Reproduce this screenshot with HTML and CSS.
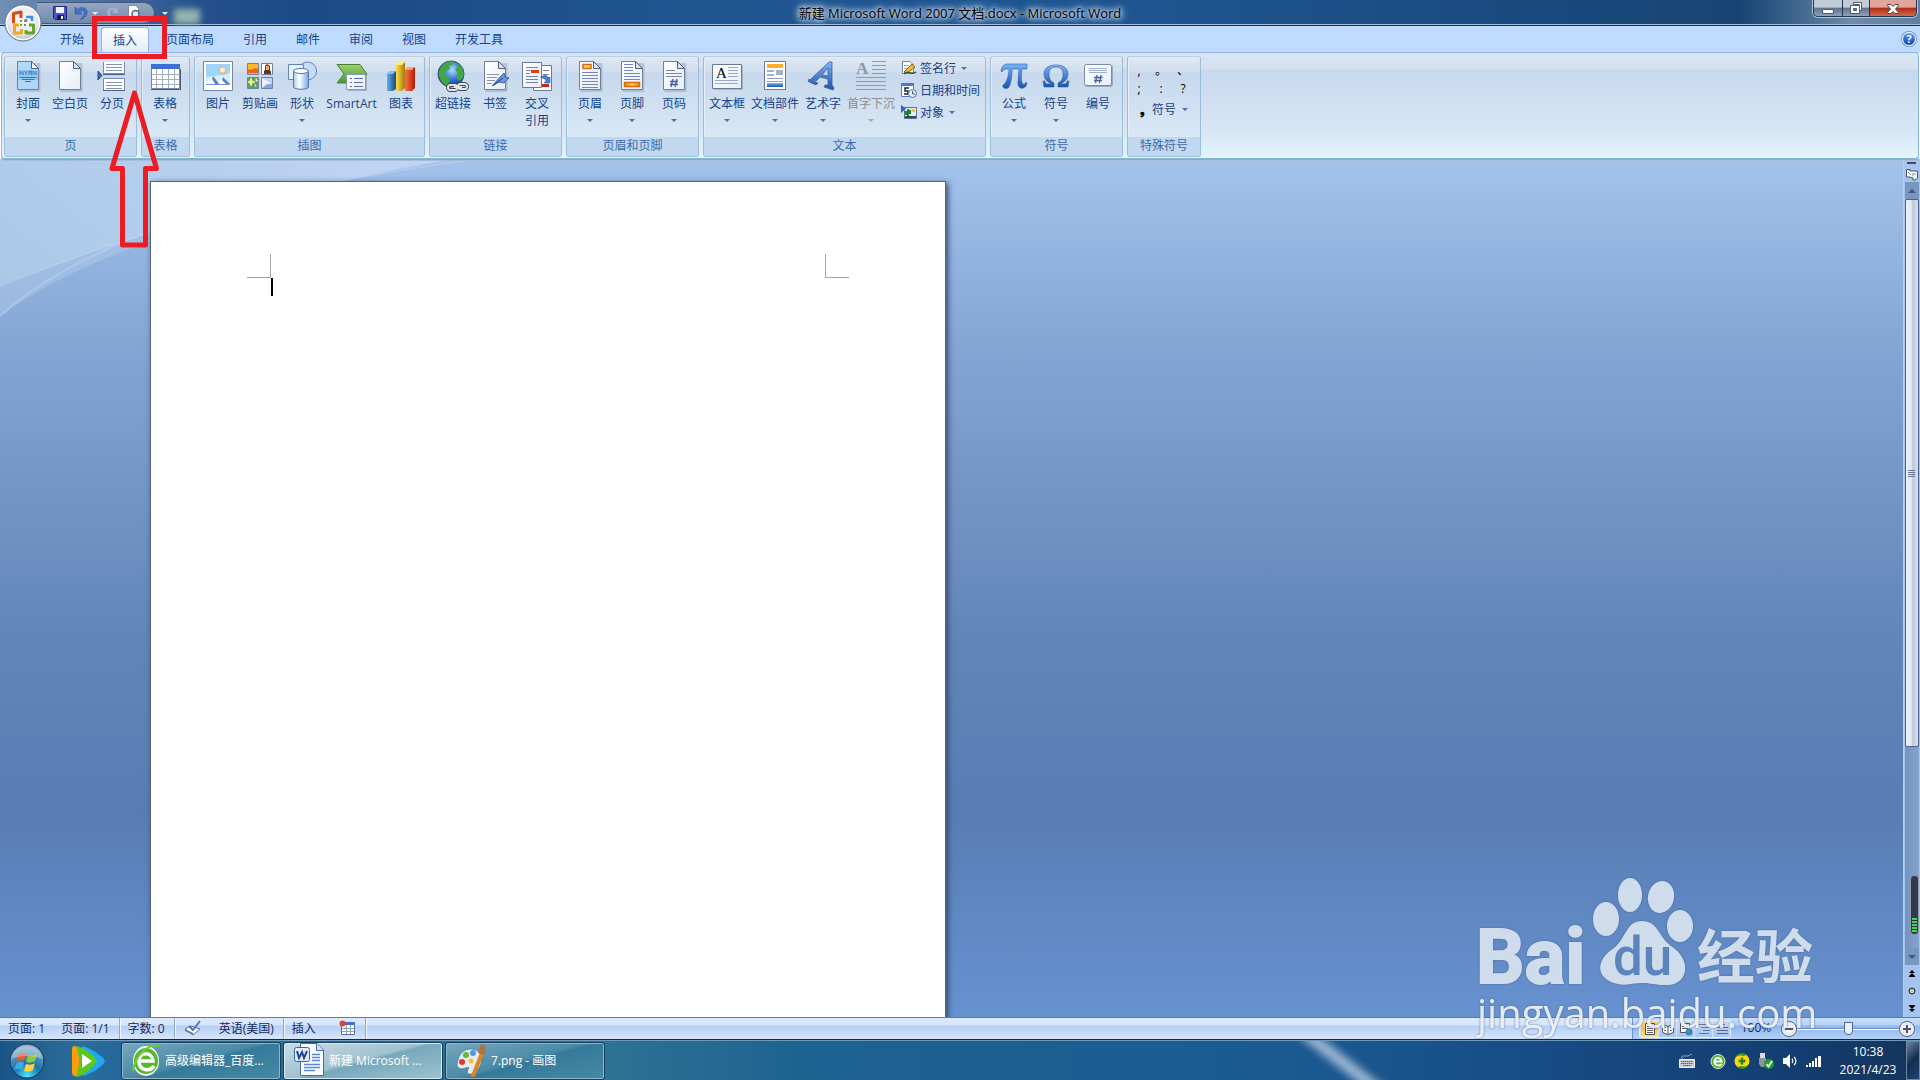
FILE: index.html
```html
<!DOCTYPE html>
<html lang="zh-CN">
<head>
    <meta charset="UTF-8">
    <meta name="viewport" content="width=device-width, initial-scale=1.0">
    <title>新建 Microsoft Word 2007 文档.docx - Microsoft Word</title>
    <link rel="stylesheet" href="styles.css">
</head>
<body>

    <!-- shared gradients and the blank sheet used by many icons -->
    <svg class="defs" width="0" height="0" aria-hidden="true">
        <defs>
            <linearGradient id="paper" x1="0" y1="0" x2="1" y2="1">
                <stop offset="0" stop-color="#ffffff"/><stop offset="1" stop-color="#e6edf8"/>
            </linearGradient>
            <linearGradient id="blue" x1="0" y1="0" x2="0" y2="1">
                <stop offset="0" stop-color="#78b4fb"/><stop offset="1" stop-color="#1c52ad"/>
            </linearGradient>
            <linearGradient id="glass" x1="0" y1="0" x2="1" y2="0">
                <stop offset="0" stop-color="#a9cdf5"/><stop offset=".4" stop-color="#fff"/><stop offset="1" stop-color="#76a7e6"/>
            </linearGradient>
            <linearGradient id="green" x1="0" y1="0" x2="0" y2="1">
                <stop offset="0" stop-color="#9cd06a"/><stop offset="1" stop-color="#4b9a35"/>
            </linearGradient>
            <linearGradient id="orange" x1="0" y1="0" x2="1" y2="0">
                <stop offset="0" stop-color="#f08a0a"/><stop offset=".5" stop-color="#ffc95c"/><stop offset="1" stop-color="#f08a0a"/>
            </linearGradient>
            <linearGradient id="barBlue"><stop offset="0" stop-color="#5eb0ee"/><stop offset="1" stop-color="#1d4880"/></linearGradient>
            <linearGradient id="barGold"><stop offset="0" stop-color="#ffe04a"/><stop offset="1" stop-color="#a17b05"/></linearGradient>
            <linearGradient id="barRed"><stop offset="0" stop-color="#ff7348"/><stop offset="1" stop-color="#b01c05"/></linearGradient>
            <radialGradient id="globe" cx=".55" cy=".35" r=".7">
                <stop offset="0" stop-color="#b4deff"/><stop offset=".5" stop-color="#2f78d8"/><stop offset="1" stop-color="#0c2f7d"/>
            </radialGradient>
            <radialGradient id="orb" cx=".5" cy=".95" r=".9">
                <stop offset="0" stop-color="#54e6ff"/><stop offset=".45" stop-color="#1673ad"/><stop offset="1" stop-color="#8fb0c8"/>
            </radialGradient>
            <radialGradient id="pearl" cx=".5" cy=".4" r=".6">
                <stop offset="0" stop-color="#ffffff"/><stop offset=".7" stop-color="#e3e6ec"/><stop offset="1" stop-color="#a9b1bf"/>
            </radialGradient>
            <g id="sheet">
                <path d="M6.500 3H28.500V32H6.500z" fill="#6b7f9c" opacity=".3"/>
                <path d="M5.500 1.500H19.500L26.500 8.500V29.500H5.500z" fill="url(#paper)" stroke="#6f7f9c"/>
                <path d="M19.500 1.500V8.500H26.500z" fill="#dbe5f4" stroke="#4e607f"/>
            </g>
        </defs>
    </svg>

    <div class="window">
        <header class="titlebar">
            <div class="quick-access">
                <button class="icon-btn" aria-label="保存">
                    <svg width="16" height="16" viewBox="0 0 16 16"><path d="M1.500 1.500H14.500V14.500H3L1.500 13z" fill="#4c55c4" stroke="#23277c"/><path d="M4 2H12V8H4z" fill="#eef2ff"/><path d="M5 10H12V15H5z" fill="#1b1e46"/><path d="M9 11H11V14H9z" fill="#fff"/></svg>
                </button>
                <button class="icon-btn" aria-label="撤销">
                    <svg width="16" height="16" viewBox="0 0 16 16"><path d="M2 2V9H9L6.500 6.600C9 4.500 11.500 5.500 11.300 8.200C11.200 10.500 9.500 12.500 7.500 14.500C12 13 14.500 10 14 6.500C13.400 2.500 8 1.200 4.500 4.500z" fill="#3f73cf" stroke="#2350a5" stroke-width=".6"/></svg>
                </button>
                <span class="arrow light"></span>
                <button class="icon-btn" aria-label="恢复" disabled>
                    <svg width="16" height="16" viewBox="0 0 16 16"><path d="M13 2V8H7L9.500 5.800C7 4.500 4.500 6 5 9C5.300 11 6.500 12.500 8 14C4 13 1.500 10 2 6.500C2.700 2.500 8 1.200 11 4z" fill="#a4b0c6"/></svg>
                </button>
                <button class="icon-btn" aria-label="打印预览">
                    <svg width="16" height="16" viewBox="0 0 16 16"><path d="M2.500.5H10L12.500 3.500V15.500H2.500z" fill="#fff" stroke="#7f8ba3"/><circle cx="9.500" cy="9" r="3.500" fill="#dceaf8" stroke="#58606e" stroke-width="1.500"/><path d="M12 11.500L15 15" stroke="#3b404a" stroke-width="2"/></svg>
                </button>
            </div>
            <span class="arrow light customise"></span>
            <span class="blob"></span>
            <h1 class="title">新建 Microsoft Word 2007 文档.docx - Microsoft Word</h1>
            <div class="caption-buttons">
                <button class="caption min" aria-label="最小化"><svg width="12" height="14" viewBox="0 0 12 14"><path d="M.5 8.500H11.500V12.500H.5z" fill="#fff" stroke="#525c70"/></svg></button>
                <button class="caption restore" aria-label="还原"><svg width="12" height="14" viewBox="0 0 12 14"><path d="M3.500 1.500H11.500V9.500H9.500V3.500H3.500z" fill="#fff" stroke="#525c70"/><path d="M.5 4.500H9.500V12.500H.5z" fill="#fff" stroke="#525c70"/><path d="M3.500 7.500H6.500V9.500H3.500z" fill="#6c7b94" stroke="#525c70"/></svg></button>
                <button class="caption close" aria-label="关闭"><svg width="12" height="14" viewBox="0 0 12 14"><path d="M.5 3.500H4L6 5.500L8 3.500H11.500V4.500L8.500 8L11.500 11.500V12.500H8L6 10.500L4 12.500H.5V11.500L3.500 8L.5 4.500z" fill="#fff" stroke="#59414c"/></svg></button>
            </div>
            <button class="office-button" aria-label="Office 按钮">
                <svg width="38" height="38" viewBox="0 0 38 38">
                    <circle cx="19" cy="19" r="18" fill="url(#pearl)" stroke="#65748f"/>
                    <circle cx="19" cy="19" r="16.500" fill="none" stroke="#fff" stroke-width="1.500"/>
                    <g fill="none" stroke-width="3" stroke-linejoin="round">
                        <path d="M11 18H9.500V9.500L17 8V14" stroke="#dc4a12"/>
                        <path d="M22 13H28V17M22 15V18" stroke="#3f8fdc" stroke-width="2.500"/>
                        <path d="M15 21H10.500V29H17.500V25" stroke="#f4a91c"/>
                        <path d="M25 21H29.500V29H22V26" stroke="#63a52f"/>
                    </g>
                    <path d="M16 16H18V18H16zM20 16H22V18H20z" fill="#e4601f"/><path d="M16 20H18V22H16zM20 20H22V22H20z" fill="#5ea33a"/>
                </svg>
            </button>
        </header>

        <nav class="tabs">
            <button class="tab">开始</button>
            <button class="tab selected">插入</button>
            <button class="tab">页面布局</button>
            <button class="tab">引用</button>
            <button class="tab">邮件</button>
            <button class="tab">审阅</button>
            <button class="tab">视图</button>
            <button class="tab">开发工具</button>
            <button class="help" aria-label="帮助">?</button>
        </nav>

        <div class="ribbon">
            <section class="group g-page">
                <div class="group-body">
                    <button class="cmd"><svg width="32" height="32" viewBox="0 0 32 32"><use href="#sheet"/><path d="M6 2H19V9H26V29H6z" fill="#a3d3f8" opacity=".85"/><path d="M6 10H26V20H6z" fill="#78bcf0" opacity=".6"/><path d="M19.500 1.500V8.500H26.500z" fill="#eef5fd" stroke="#4e607f"/><path d="M8 15V11L11 15V11M12.500 11L14 13L15.500 11M14 13V15M17 15V11H19.500V15M17 13H19.500M21 15V11L24 15V11" fill="none" stroke="#4a82bb"/><path d="M8 17.500H24M10 19.500H22M13 21.500H19" stroke="#3974b0"/></svg><span>封面</span><i class="arrow"></i></button>
                    <button class="cmd"><svg width="32" height="32" viewBox="0 0 32 32"><use href="#sheet"/></svg><span>空白页</span></button>
                    <button class="cmd"><svg width="32" height="32" viewBox="0 0 32 32"><path d="M7.500 2V13.500H28.500V2M7.500 30V18.500H28.500V30" fill="#fff" stroke="#7a89a6"/><path d="M10 4.500H26M10 7.500H26M10 10.500H26M10 22.500H26M10 25.500H26M10 28.500H26" stroke="#8491c4"/><path d="M7 14.500H29M7 30.500H29" stroke="#4f5f80"/><path d="M2 11L6 15.500L2 20z" fill="#4169c0" stroke="#2f4d99"/></svg><span>分页</span></button>
                </div>
                <h2 class="group-label">页</h2>
            </section>
            <section class="group g-table">
                <div class="group-body">
                    <button class="cmd"><svg width="32" height="32" viewBox="0 0 32 32"><path d="M2.500 4.500H30.500V28.500H2.500z" fill="#fff" stroke="#7787a5"/><path d="M2 4H31V9H2z" fill="#3f6fd3"/><path d="M3 14.500H30M3 19.500H30M3 24.500H30M7.500 9V28M13.500 9V28M19.500 9V28M25.500 9V28" stroke="#a3aec4"/><path d="M2 29.500H31M31.500 9V30" stroke="#4a5a78"/></svg><span>表格</span><i class="arrow"></i></button>
                </div>
                <h2 class="group-label">表格</h2>
            </section>
            <section class="group g-illustration">
                <div class="group-body">
                    <button class="cmd"><svg width="32" height="32" viewBox="0 0 32 32"><path d="M1.500 1.500H30.500V30.500H1.500z" fill="#fff" stroke="#76869f"/><path d="M4 4H28V25H4z" fill="#9fd5fa"/><path d="M4 18C12 14 20 17 28 13V25H4z" fill="#d5efff"/><circle cx="20.500" cy="10" r="3.200" fill="#fff1d5" stroke="#f8a05e"/><path d="M4 24L11 16L16 22L21 17L28 24V25H4z" fill="#f5f8ff"/><path d="M11 16L18 25H14L10 19zM21 17L28 24H24L20 20z" fill="#5c80c8"/><path d="M4 24H28V25H4z" fill="#6f92d0"/></svg><span>图片</span></button>
                    <button class="cmd"><svg width="32" height="32" viewBox="0 0 32 32"><path d="M3.500 3.500H14.500V14.500H3.500z" fill="#ffb728" stroke="#718198"/><path d="M4 9C7 12 11 6 14 9V13H4z" fill="#f06418"/><path d="M17.500 3.500H28.500V14.500H17.500z" fill="#fff" stroke="#718198"/><path d="M20 14V11L21 10V6L23 4L26 6V10L27 12V14z" fill="#633222"/><path d="M22 6H25V10H22z" fill="#ecae72"/><path d="M3.500 17.500H14.500V28.500H3.500z" fill="#4da567" stroke="#718198"/><path d="M7 18L8 21L11 22L8 23L7 26L6 23L4 22L6 21zM12 18V21H14M11 24L12 27" fill="#ffe58a" stroke="#ffe58a"/><path d="M17.500 17.500H28.500V28.500H17.500z" fill="#bdd0fc" stroke="#718198"/><path d="M18 18L27 23L18 28z" fill="#eaf2ff"/><path d="M18 28L23 24H28V28z" fill="#84a4eb"/></svg><span>剪贴画</span></button>
                    <button class="cmd"><svg width="32" height="32" viewBox="0 0 32 32"><circle cx="21.500" cy="11" r="9" fill="#c7defa" stroke="#6482b3"/><path d="M2.500 4.500H17.500V19.500H2.500z" fill="#e8f2fd" stroke="#6482b3"/><path d="M7.500 11V27C8 30 22.500 30 22.500 27V11z" fill="url(#glass)" stroke="#5274ad"/><ellipse cx="15" cy="11" rx="7.500" ry="2.500" fill="#fff" stroke="#5274ad"/></svg><span>形状</span><i class="arrow"></i></button>
                    <button class="cmd wide"><svg width="32" height="32" viewBox="0 0 32 32"><path d="M1 4.500H24L31 14L24 23H1L8 14z" fill="url(#green)" stroke="#488039"/><path d="M12 16H31V31H12z" fill="#5b708e" opacity=".4"/><path d="M10.500 14.500H29.500V29.500H10.500z" fill="url(#paper)" stroke="#8b9ab2"/><path d="M14 18.500H16M18 18.500H27M14 22.500H16M18 22.500H27M14 26.500H16M18 26.500H27" stroke="#5970a6"/></svg><span>SmartArt</span></button>
                    <button class="cmd"><svg width="32" height="32" viewBox="0 0 32 32"><path d="M2 14L5 11H11V29L8 31H2z" fill="url(#barBlue)"/><path d="M2 14L5 11H11L8 14z" fill="#7fc0f5"/><path d="M11 5L14 2H20V28L17 31H11z" fill="url(#barGold)"/><path d="M11 5L14 2H20L17 5z" fill="#ffe978"/><path d="M20 10L23 7H30V28L27 31H20z" fill="url(#barRed)"/><path d="M20 10L23 7H30L27 10z" fill="#ff9873"/></svg><span>图表</span></button>
                </div>
                <h2 class="group-label">插图</h2>
            </section>
            <section class="group g-page">
                <div class="group-body">
                    <button class="cmd"><svg width="32" height="32" viewBox="0 0 32 32"><circle cx="14" cy="14" r="13" fill="url(#globe)" stroke="#28527f"/><path d="M4 7C7 2 13 0 17 2L15 5L12 6L13 9L9 11L8 15L12 17L13 21L10 26C4 23 1 17 2 11zM20 3C25 6 28 11 26 18L22 21L19 17L21 14L18 9L21 7z" fill="#45a544"/><g fill="none" stroke="#40464f" stroke-width="4"><rect x="11" y="25" width="9" height="5" rx="2.500"/><rect x="21" y="24" width="9" height="5" rx="2.500"/></g><g fill="none" stroke="#e3e7ec" stroke-width="2"><rect x="11" y="25" width="9" height="5" rx="2.500"/><rect x="21" y="24" width="9" height="5" rx="2.500"/><path d="M17 27H25"/></g></svg><span>超链接</span></button>
                    <button class="cmd"><svg width="32" height="32" viewBox="0 0 32 32"><use href="#sheet"/><path d="M8 14.500H20M8 17.500H18M8 20.500H16M8 23.500H13" stroke="#8792b4"/><path d="M14 25L21 17L25 13L26 17L30 18L25 23L20 22L15 25z" fill="#6f96dd" stroke="#3d62ad"/><path d="M13 26L24 18" stroke="#223f80"/></svg><span>书签</span></button>
                    <button class="cmd"><svg width="32" height="32" viewBox="0 0 32 32"><path d="M12.500 5.500H30.500V30.500H12.500z" fill="#fff" stroke="#697a98"/><path d="M22 10.500H28M22 14.500H28M22 17.500H28" stroke="#7382a8"/><path d="M21 24H28V27H21z" fill="#c22b10"/><path d="M1.500 2.500H20.500V27.500H1.500z" fill="url(#paper)" stroke="#697a98"/><path d="M5 7.500H17M5 10.500H9M5 13.500H9M5 16.500H17M5 19.500H17M5 22.500H17" stroke="#7481b5"/><path d="M10 10H18V13H10z" fill="#e33d14"/><path d="M20 17C24 14 27 16 27 18L29 17V23H23L25 21C24 18 22 18 20 18z" fill="#4a7ddc" stroke="#2b56ab" stroke-width=".6"/></svg><span>交叉<br>引用</span></button>
                </div>
                <h2 class="group-label">链接</h2>
            </section>
            <section class="group g-page">
                <div class="group-body">
                    <button class="cmd"><svg width="32" height="32" viewBox="0 0 32 32"><use href="#sheet"/><path d="M9 4.500H17V8.500H9z" fill="#ffd078" stroke="#d36c0b" stroke-width="1.500"/><path d="M8 12.500H24M8 15.500H24M8 18.500H24M8 21.500H24M8 24.500H24M8 27.500H24" stroke="#7886c0"/></svg><span>页眉</span><i class="arrow"></i></button>
                    <button class="cmd"><svg width="32" height="32" viewBox="0 0 32 32"><use href="#sheet"/><path d="M8 4.500H17M8 7.500H17M8 10.500H17M8 13.500H24M8 16.500H24M8 19.500H24" stroke="#7886c0"/><path d="M8.500 22.500H23.500V26.500H8.500z" fill="url(#orange)" stroke="#d36c0b" stroke-width="1.500"/></svg><span>页脚</span><i class="arrow"></i></button>
                    <button class="cmd"><svg width="32" height="32" viewBox="0 0 32 32"><use href="#sheet"/><path d="M8 10.500H17M8 13.500H24M8 16.500H24" stroke="#7886c0"/><path d="M15 19L13 27M19 19L17 27M12 21.500H20M12 24.500H20" stroke="#465f9c" stroke-width="1.300"/></svg><span>页码</span><i class="arrow"></i></button>
                </div>
                <h2 class="group-label">页眉和页脚</h2>
            </section>
            <section class="group g-text">
                <div class="group-body">
                    <button class="cmd"><svg width="32" height="32" viewBox="0 0 32 32"><path d="M3 6H32V30H3z" fill="#6b7f9c" opacity=".4"/><path d="M1.500 4.500H30.500V28.500H1.500z" fill="url(#paper)" stroke="#687997"/><text class="serif" x="5" y="18" font-size="15">A</text><path d="M17 7.500H27M17 10.500H27M17 13.500H27M17 16.500H27M4 20.500H27M4 23.500H27" stroke="#98a8cc"/></svg><span>文本框</span><i class="arrow"></i></button>
                    <button class="cmd part"><svg width="32" height="32" viewBox="0 0 32 32"><path d="M5.500 1.500H26.500V29.500H5.500z" fill="#fff" stroke="#697a98"/><path d="M8 4H24V8H8z" fill="#ffac2b"/><path d="M8 10H15V12H8zM17 10H24V15H17zM8 14H15V16H8z" fill="#a5b0c9"/><path d="M8 18.500H24M8 21.500H24" stroke="#929fc0"/><path d="M8 23H24V27H8z" fill="url(#blue)"/></svg><span>文档部件</span><i class="arrow"></i></button>
                    <button class="cmd"><svg width="32" height="32" viewBox="0 0 32 32"><path d="M2 19L11 23L9 25L2 22L1 21zM4 19L22 2H25V25L27 28L26 30L17 27L18 25L21 25V19L13 17L9 21zM15 15L21 16V8z" fill="url(#blue)" stroke="#3e557d" stroke-width=".7"/></svg><span>艺术字</span><i class="arrow"></i></button>
                    <button class="cmd part" disabled><svg width="32" height="32" viewBox="0 0 32 32"><text class="serif" x="1" y="14" font-size="17" font-weight="bold" fill="#8997b0">A</text><path d="M17 1.500H31M17 5.500H31M17 9.500H31M17 13.500H31M1 17.500H31M1 21.500H31M1 25.500H31M1 29.500H31" stroke="#8b9bb8"/></svg><span>首字下沉</span><i class="arrow"></i></button>
                    <div class="small-list">
                        <button class="small"><svg width="16" height="16" viewBox="0 0 16 16"><path d="M1.500 1.500H9L12.500 5V13.500H1.500z" fill="#fff" stroke="#7585a0"/><path d="M3 5.500H8M3 8.500H8" stroke="#9ba7c4"/><path d="M3 12L11 4L14 7L6 13z" fill="#f4be32" stroke="#8c5a17"/><path d="M3 14C7 9 10 16 15 12" fill="none" stroke="#3e582c" stroke-width="1.600"/></svg>签名行<i class="arrow"></i></button>
                        <button class="small"><svg width="16" height="16" viewBox="0 0 16 16"><path d="M.5 1.500H12.500V14.500H.5z" fill="#fff" stroke="#5d77b1"/><path d="M0 1H13V4H0z" fill="#4a79d5"/><path d="M8 6H4V9H7V12H3" fill="none" stroke="#1b2542" stroke-width="1.500"/><circle cx="11.500" cy="11.500" r="4" fill="#e5effc" stroke="#5b769f"/><path d="M11.500 9V12H14" fill="none" stroke="#425781"/></svg>日期和时间</button>
                        <button class="small"><svg width="16" height="16" viewBox="0 0 16 16"><path d="M3.500 3.500H15.500V14.500H3.500z" fill="#e1f0fa" stroke="#5d708d"/><path d="M0 1L5 4.500L0 9z" fill="#3264c4"/><path d="M7 14V5M5 7V10H7M9 6V9H7" fill="none" stroke="#218226" stroke-width="2"/><circle cx="12.500" cy="6.500" r="1.500" fill="#f4b12a"/><path d="M4 12H15V14H4z" fill="#2e4c5c"/></svg>对象<i class="arrow"></i></button>
                    </div>
                </div>
                <h2 class="group-label">文本</h2>
            </section>
            <section class="group g-page">
                <div class="group-body">
                    <button class="cmd"><svg width="32" height="32" viewBox="0 0 32 32"><path d="M3 11C4 6 6 4 10 4H29V9H24C23 17 23 22 25 24C26 25 27 24 28 22L29 24C27 30 19 30 20 22L21 9H14C14 17 13 23 11 27C8 30 4 28 5 25C8 24 11 16 11 9C7 9 6 9 4 12z" fill="url(#blue)" stroke="#2f5da8" stroke-width=".6"/></svg><span>公式</span><i class="arrow"></i></button>
                    <button class="cmd"><svg width="32" height="32" viewBox="0 0 32 32"><path d="M3 21H5C5 23 6 24 8 24H11C6 21 4 18 4 14C4 8 9 5 16 5S28 8 28 14C28 18 26 21 21 24H24C26 24 27 23 27 21H29L28 27H18V23C22 21 23 18 23 14C23 10 21 7 16 7S9 10 9 14C9 18 10 21 14 23V27H4z" fill="url(#blue)" stroke="#2f5da8" stroke-width=".6"/></svg><span>符号</span><i class="arrow"></i></button>
                    <button class="cmd"><svg width="32" height="32" viewBox="0 0 32 32"><rect x="3" y="5" width="28" height="22" rx="2" fill="#64779a" opacity=".5"/><rect x="2.500" y="4.500" width="27" height="21" rx="2" fill="url(#paper)" stroke="#7c8aa5"/><path d="M7 8.500H25M7 10.500H25M7 12.500H25" stroke="#9faed0"/><path d="M15 15L13.500 23M19 15L17.500 23M12 17.500H20.500M12 20.500H20" stroke="#465f9c" stroke-width="1.300"/></svg><span>编号</span></button>
                </div>
                <h2 class="group-label">符号</h2>
            </section>
            <section class="group g-special">
                <div class="group-body marks">
                    <button>,</button><button>。</button><button>、</button>
                    <button>;</button><button>:</button><button>?</button>
                    <button class="more"><b>❟</b>符号<i class="arrow"></i></button>
                </div>
                <h2 class="group-label">特殊符号</h2>
            </section>
        </div>

        <main class="workspace">
            <svg class="swoosh" width="600" height="260" viewBox="0 0 600 260">
                <defs><linearGradient id="sw"><stop offset="0" stop-color="#b2ceea" stop-opacity=".8"/><stop offset="1" stop-color="#c3d7f4" stop-opacity=".95"/></linearGradient></defs>
                <path d="M0 0H455C330 20 140 70 0 128z" fill="url(#sw)"/>
                <path d="M0 128C45 108 90 90 150 73V83C90 103 40 128 0 157z" fill="#c3d8ef" opacity=".3"/>
                <path d="M475 0C300 25 110 60 0 157" fill="none" stroke="#c6daf3" stroke-opacity=".4" stroke-width="2"/>
            </svg>
            <div class="canvas">
                <article class="sheet">
                    <div class="margins">
                        <span class="crop left"></span>
                        <span class="crop right"></span>
                    </div>
                    <div class="text-area"><span class="caret"></span></div>
                </article>
            </div>
            <div class="scrollbar">
                <span class="splitter"></span>
                <button class="ruler" aria-label="标尺"><svg width="14" height="13" viewBox="0 0 14 13"><path d="M1.500 1.500H5V3H12.500V10L10 12H8V10L5 9H1.500z" fill="#fff" stroke="#46526b"/><path d="M3 4L6 7M8 5V8M10 5V7" stroke="#7a869c"/></svg></button>
                <div class="track">
                    <button class="step up" aria-label="向上滚动"></button>
                    <div class="thumb"><i></i></div>
                    <span class="meter"></span>
                    <button class="step down" aria-label="向下滚动"></button>
                </div>
                <div class="browse">
                    <button aria-label="前一页"><svg width="8" height="8" viewBox="0 0 8 8"><path d="M4 0L7 3H1zM4 3L7 6H1zM1 6H7V7H1z"/></svg></button>
                    <button aria-label="选择浏览对象"><svg width="8" height="8" viewBox="0 0 8 8"><circle cx="4" cy="4" r="3" fill="#c3c3c3" stroke="#222"/></svg></button>
                    <button aria-label="下一页"><svg width="8" height="8" viewBox="0 0 8 8"><path d="M4 8L7 5H1zM4 5L7 2H1zM1 1H7V2H1z"/></svg></button>
                </div>
            </div>
        </main>

        <footer class="statusbar">
            <button class="stat">页面: 1</button>
            <button class="stat sep">页面: 1/1</button>
            <button class="stat sep">字数: 0</button>
            <button class="stat" aria-label="校对"><svg width="18" height="16" viewBox="0 0 18 16"><path d="M1 9L7 6L16 9L9 15z" fill="#fff" stroke="#637290"/><path d="M1 9L9 13V15L1 11z" fill="#6b7b98"/><path d="M5 6L9 10L16 1" fill="none" stroke="#4a73c9" stroke-width="2"/></svg></button>
            <button class="stat sep">英语(美国)</button>
            <button class="stat">插入</button>
            <button class="stat sep" aria-label="宏录制"><svg width="16" height="16" viewBox="0 0 16 16"><path d="M2.500 2.500H15.500V14.500H2.500z" fill="#fff" stroke="#566c9c"/><path d="M2 2H16V5H2z" fill="#3f6fd3"/><path d="M3 8.500H15M3 11.500H15M7.500 5V14M11.500 5V14" stroke="#93a1bd"/><circle cx="3.500" cy="3.500" r="3" fill="#e0452a"/></svg></button>
            <div class="status-right">
                <div class="views">
                    <button class="view on" aria-label="页面视图"><svg width="14" height="14" viewBox="0 0 14 14"><path d="M2.500 1.500H11.500V12.500H2.500z" fill="#fff" stroke="#4a4e57"/><path d="M4 4.500H10M4 6.500H10M4 8.500H10M4 10.500H10" stroke="#5d6068"/></svg></button>
                    <button class="view" aria-label="阅读版式"><svg width="14" height="14" viewBox="0 0 14 14"><path d="M1.500 2.500L7 4.500L12.500 2.500V10.500L7 12.500L1.500 10.500zM7 4V12" fill="#fff" stroke="#4a4e57"/><path d="M3 5.500H5M3 8.500H5M9 5.500H11M9 8.500H11" stroke="#5d6068"/></svg></button>
                    <button class="view" aria-label="Web 版式"><svg width="14" height="14" viewBox="0 0 14 14"><path d="M1.500 1.500H10.500V10.500H1.500z" fill="#fff" stroke="#4a4e57"/><path d="M3 4.500H9M3 6.500H9" stroke="#5d6068"/><circle cx="10" cy="10" r="3.500" fill="#3b82cf"/><path d="M8 9L11 7L10 11z" fill="#4ba33e"/></svg></button>
                    <button class="view" aria-label="大纲视图"><svg width="14" height="14" viewBox="0 0 14 14"><path d="M1 2.500H9M4 5.500H13M6 8.500H13M2 11.500H12" stroke="#6a7690"/></svg></button>
                    <button class="view" aria-label="普通视图"><svg width="14" height="14" viewBox="0 0 14 14"><path d="M2 2.500H10M2 5.500H13M2 8.500H13M2 11.500H13" stroke="#5b6780"/></svg></button>
                </div>
                <button class="stat percent">100%</button>
                <button class="round" aria-label="缩小"><svg width="8" height="8" viewBox="0 0 8 8"><path d="M0 4H8" stroke="#4b566e" stroke-width="2"/></svg></button>
                <input class="zoom" type="range" min="10" max="190" value="100" aria-label="显示比例">
                <button class="round" aria-label="放大"><svg width="8" height="8" viewBox="0 0 8 8"><path d="M0 4H8M4 0V8" stroke="#4b566e" stroke-width="2"/></svg></button>
            </div>
        </footer>

        <div class="taskbar">
            <span class="streak"></span>
            <button class="start" aria-label="开始">
                <svg width="36" height="38" viewBox="0 0 36 38"><circle cx="18" cy="19" r="17" fill="url(#orb)" stroke="#0f3558"/><path d="M9 13C12 10 15 11 17 12L15 19C12 17 10 18 7 20z" fill="#ef5a28"/><path d="M19 13C22 14 25 14 28 12L26 19C23 21 20 21 17 20z" fill="#8fc93e"/><path d="M7 22C10 19 12 19 15 21L13 28C10 26 8 27 5 28z" fill="#3fa9e8"/><path d="M17 22C20 23 23 23 26 21L24 28C21 30 18 30 15 29z" fill="#ffd23a"/><path d="M2 17C5 0 31 0 34 17C24 13 12 13 2 17z" fill="#fff" opacity=".3"/></svg>
            </button>
            <button class="pinned" aria-label="播放器">
                <svg width="34" height="34" viewBox="0 0 34 34"><path d="M11 2C20 4 28 10 33 15C34 17 34 18 33 19C27 26 19 30 12 32z" fill="#22a7f4"/><path d="M1 5C1 2 3 1 6 3L11 27L6 32C3 33 1 31 1 28z" fill="#ff9c0a"/><path d="M5 2C13 3 21 10 25 15C26 17 26 18 25 19C19 26 12 32 5 33C9 22 9 12 5 2z" fill="#5cc81c"/><path d="M11 10L21 17L11 24z" fill="#fff"/></svg>
            </button>
            <button class="task">
                <svg width="28" height="34" viewBox="0 0 28 34"><ellipse cx="14" cy="18" rx="13" ry="15" fill="#fff"/><ellipse cx="14" cy="18" rx="12" ry="13" fill="#55b92b"/><path d="M22 23C18 29 7 28 7 18C7 9 20 8 21 18H9" fill="none" stroke="#fff" stroke-width="3.500"/><path d="M1 28C3 13 16 0 27 3" fill="none" stroke="#6dcf2f" stroke-width="2"/></svg>
                <span>高级编辑器_百度...</span>
            </button>
            <button class="task active">
                <svg width="30" height="34" viewBox="0 0 30 34"><path d="M6.500.5H23L29.500 7V32.500H6.500z" fill="#f6fafe" stroke="#4a69a5"/><path d="M22.500.5V7.500H29" fill="#d5e2f5" stroke="#4a69a5"/><path d="M10 21.500H26M10 24.500H26M10 27.500H21M18 11.500H26M18 14.500H26M18 17.500H26" stroke="#5f88ce" stroke-width="1.500"/><rect x=".5" y="4.500" width="15" height="14" rx="2" fill="#e2ecfa" stroke="#3963ae"/><path d="M3 8L5 15L8 9L10 15L13 8" fill="none" stroke="#1f4798" stroke-width="2"/></svg>
                <span>新建 Microsoft ...</span>
            </button>
            <button class="task">
                <svg width="30" height="34" viewBox="0 0 30 34"><path d="M2 17C4 6 16 3 23 9C29 15 24 29 15 31C10 32 11 27 13 25C10 23 7 28 3 25C0 23 1 20 2 17z" fill="#e5edf3" stroke="#5389a6"/><circle cx="6" cy="19" r="3" fill="#df3b2c"/><circle cx="10" cy="12" r="3" fill="#6eb536"/><circle cx="17" cy="10" r="3" fill="#4c9be0"/><circle cx="15" cy="18" r="2.500" fill="#f5c22d"/><path d="M26 10L17 33" stroke="#dd8423" stroke-width="4" stroke-linecap="round"/><path d="M22 10C23 6 23 4 26 1C31 2 31 6 28 12z" fill="#a97546"/></svg>
                <span>7.png - 画图</span>
            </button>
            <div class="tray">
                <button class="tray-icon keyboard" aria-label="输入法"><svg width="16" height="16" viewBox="0 0 16 16"><path d="M.5 6.500H15.500V14.500H.5z" fill="#c9ccd2" stroke="#eceef1"/><path d="M2 8.500H14M2 10.500H14M4 12.500H12" stroke="#5b6370" stroke-dasharray="1.500 .5"/><path d="M3 6V3H9L13 1" fill="none" stroke="#9aa0a8"/></svg></button>
                <button class="tray-icon" aria-label="浏览器"><svg width="16" height="16" viewBox="0 0 16 16"><circle cx="8" cy="8.500" r="7" fill="#4fb52c" stroke="#d9f3cb"/><path d="M12 11C9 14 4 12 4.500 8C5 4 11 4 11.500 8.500H5" fill="none" stroke="#fff" stroke-width="2"/></svg></button>
                <button class="tray-icon" aria-label="安全卫士"><svg width="16" height="16" viewBox="0 0 16 16"><circle cx="8" cy="8" r="7.500" fill="#ffd60a"/><path d="M1 5C3 0 9-1 13 2L9 3C5 2 3 3 1 5M15 11C13 16 7 17 3 14L7 13C11 14 13 13 15 11" fill="#2e9b22"/><path d="M8 4.500V11.500M4.500 8H11.500" stroke="#23881c" stroke-width="2.500"/></svg></button>
                <button class="tray-icon" aria-label="安全删除硬件"><svg width="16" height="16" viewBox="0 0 16 16"><path d="M2 0H7V5H2z" fill="#d7dade"/><path d="M1 5H8V11L6 14H3L1 11z" fill="#8e949c"/><circle cx="11" cy="11" r="5" fill="#1e9e26"/><path d="M8.500 11L10.500 13.500L14 8" fill="none" stroke="#fff" stroke-width="1.800"/></svg></button>
                <button class="tray-icon" aria-label="音量"><svg width="16" height="16" viewBox="0 0 16 16"><path d="M1 5H4L8 1V15L4 11H1z" fill="#fff"/><path d="M10 6C11 7 11 9 10 10M12 4C14.500 6 14.500 10 12 12" fill="none" stroke="#fff" stroke-width="1.200"/></svg></button>
                <button class="tray-icon" aria-label="网络"><svg width="16" height="16" viewBox="0 0 16 16"><path d="M0 12H2V14H0zM3 10H5V14H3zM6 8H8V14H6zM9 5H11V14H9zM12 3H15V14H12z" fill="#fff"/></svg></button>
                <time class="clock">10:38<br>2021/4/23</time>
            </div>
            <button class="show-desktop" aria-label="显示桌面"></button>
        </div>
    </div>

    <!-- red box and arrow pointing at the insert tab -->
    <svg class="callout" width="170" height="250" viewBox="0 0 170 250" fill="none" stroke="#ed1c24" stroke-width="5">
        <path d="M94.500 18.500H164.500V56.500H94.500z"/>
        <path d="M134.500 93L112 168.500H122.500V245H145.500V168.500H156.500z" stroke-linejoin="round"/>
    </svg>

    <svg class="watermark" width="350" height="180" viewBox="0 0 350 180" fill="#dbe6f4">
        <g opacity=".92">
            <text class="bai" x="0" y="114">Bai</text>
            <ellipse cx="130" cy="50" rx="13" ry="17"/>
            <ellipse cx="154" cy="26" rx="12" ry="17"/>
            <ellipse cx="185" cy="28" rx="13" ry="16" transform="rotate(12 185 28)"/>
            <ellipse cx="204" cy="57" rx="13" ry="16"/>
            <path d="M166 52C182 52 182 67 195 77C217 91 212 117 190 116C178 116 175 114 166 114C157 114 150 117 142 115C118 110 120 90 138 79C151 68 150 52 166 52z"/>
            <text class="du" x="137" y="106">du</text>
            <text class="jingyan" x="221" y="109">经验</text>
        </g>
        <text class="url" x="1" y="159">jingyan.baidu.com</text>
    </svg>

</body>
</html>
```

FILE: styles.css
```css
* {
    box-sizing: border-box;
}

body {
    margin: 0;
    font-family: "Open Sans", "Noto Sans CJK SC", sans-serif;
    font-size: 12px;
    color: #15428b;
    overflow: hidden;
}

button {
    margin: 0;
    padding: 0;
    border: none;
    background: none;
    font: inherit;
    color: inherit;
}

h1, h2 {
    margin: 0;
    font-size: 12px;
    font-weight: normal;
}

svg {
    display: block;
    flex: none;
}

.defs {
    position: absolute;
}

.window {
    display: flex;
    flex-direction: column;
    height: 100vh;
}

.arrow {
    display: block;
    width: 0;
    height: 0;
    border: 3px solid transparent;
    border-top-color: #4672ae;
    border-bottom: none;
}

.arrow.light {
    border-top-color: #e4ebf5;
}

/* title bar */
.titlebar {
    position: relative;
    display: flex;
    align-items: flex-start;
    height: 26px;
    border-bottom: 1px solid #0c2b55;
    box-shadow: inset 0 -1px #a9bdd4;
    background: linear-gradient(90deg, #6f8fb5 0, #24518c 200px, #1c4a86 300px, #1f5690 700px, #1e5590 1150px, #174474 1740px, #406890 1800px, #6d8cab 1850px, #5f80a3);
}

.quick-access {
    display: flex;
    align-items: center;
    gap: 5px;
    width: 118px;
    height: 22px;
    margin: 2px 0 0 37px;
    padding-left: 15px;
    border: 1px solid #42597d;
    border-left: none;
    border-radius: 0 12px 12px 0;
    background: linear-gradient(#93a6c1, #7089ad);
}

.quick-access .arrow {
    margin: 0 2px 0 -2px;
}

.customise {
    margin: 12px 0 0 7px;
}

.blob {
    width: 26px;
    height: 15px;
    margin: 9px 0 0 6px;
    background: #93b5b0;
    filter: blur(3px);
}

.title {
    position: absolute;
    left: 0;
    right: 0;
    top: 2px;
    height: 22px;
    font-size: 13px;
    line-height: 22px;
    text-align: center;
    color: #000;
    text-shadow: 0 0 3px #b9cbe0, 0 0 5px #b9cbe0, 0 0 7px #b9cbe0, 0 0 8px #b9cbe0, 0 0 10px #b9cbe0;
}

.caption-buttons {
    position: relative;
    display: flex;
    margin-left: auto;
    margin-right: 3px;
    border: 1px solid #26354b;
    border-top: none;
    border-radius: 0 0 5px 5px;
    box-shadow: 0 0 0 1px #b5c5d6;
    overflow: hidden;
}

.caption {
    display: flex;
    justify-content: center;
    align-items: center;
    height: 16px;
    background: linear-gradient(#c2ccd7 45%, #5f738d 50%, #8fa2b8);
}

.min {
    width: 28px;
}

.restore {
    width: 27px;
    border-left: 1px solid #26354b;
}

.close {
    width: 47px;
    border-left: 1px solid #26354b;
    background: linear-gradient(#dfa79c 45%, #b22a14 50%, #d0694c);
}

.office-button {
    position: absolute;
    left: 4px;
    top: 4px;
    z-index: 2;
}

/* ribbon tabs */
.tabs {
    display: flex;
    gap: 5px;
    height: 27px;
    padding: 1px 4px 0 48px;
    background: #bfdbff;
}

.tab {
    height: 26px;
    padding: 0 11px;
    border: 1px solid transparent;
    border-width: 0 1px;
    line-height: 26px;
}

.tab.selected {
    border: 1px solid #8fb3dc;
    border-bottom: none;
    border-radius: 4px 4px 0 0;
    background: linear-gradient(#fdfeff, #e2ebf7);
    line-height: 24px;
}

.help {
    width: 14px;
    height: 14px;
    margin: 5px 0 0 auto;
    border: 1px solid #fff;
    border-radius: 50%;
    box-shadow: 0 0 0 1px #6d95c8;
    background: linear-gradient(#5c9cf3, #1141b5);
    color: #fff;
    font-weight: bold;
    font-size: 11px;
    line-height: 12px;
}

/* ribbon */
.ribbon {
    display: flex;
    gap: 4px;
    height: 107px;
    margin: -1px 1px 0;
    padding: 3px 2px 0;
    border: 1px solid #8db2e3;
    border-bottom-color: #82b6cf;
    border-radius: 4px;
    background: linear-gradient(#dbe6f4 0, #d3dff0 16px, #c7d8ed 17px, #d8e7f5 80px, #e4f5fd);
    box-shadow: 0 1px #8fa9c9, 0 2px #a9bedb;
    z-index: 1;
}

.group {
    display: flex;
    flex-direction: column;
    height: 101px;
    border: 1px solid #9cbdda;
    border-top-color: #bccbde;
    border-radius: 3px;
    background: linear-gradient(#dee8f5 0, #d1deee 15px, #c7d8ed 16px, #d8e8f5 80px);
    box-shadow: inset 1px 1px #e6eef8;
    overflow: hidden;
}

.g-page {
    width: 133px;
}

.g-table {
    width: 49px;
}

.g-illustration {
    width: 231px;
}

.g-text {
    width: 283px;
}

.g-special {
    width: 74px;
}

.group-body {
    display: flex;
    flex: 1;
    padding: 3px 2px 0;
}

.group-label {
    height: 19px;
    background: #c1d8f0;
    color: #3e6aaa;
    line-height: 18px;
    text-align: center;
}

.cmd {
    display: flex;
    flex-direction: column;
    align-items: center;
    width: 42px;
    line-height: 17px;
    white-space: nowrap;
}

.cmd span {
    margin-top: 3px;
}

.cmd .arrow {
    margin-top: 7px;
}

.cmd.wide {
    width: 57px;
}

.cmd.part {
    width: 54px;
}

.cmd:disabled {
    color: #8d8d8d;
}

.cmd:disabled .arrow {
    border-top-color: #a8a8a8;
}

.serif {
    font-family: "Liberation Serif", serif;
}

.small-list {
    display: flex;
    flex-direction: column;
    margin-top: -3px;
    padding-left: 3px;
}

.small {
    display: flex;
    align-items: center;
    gap: 3px;
    height: 22px;
    white-space: nowrap;
}

.small .arrow {
    margin-left: 2px;
}

.group-body.marks {
    display: grid;
    grid-template-columns: repeat(3, 22px);
    grid-template-rows: 18px 18px 24px;
    padding: 4px 0 0;
    color: #000;
}

.more {
    display: flex;
    align-items: center;
    grid-column: 1 / 4;
    gap: 6px;
    padding-left: 10px;
    color: #15428b;
}

.more b {
    width: 8px;
    color: #000;
}

/* document area */
.workspace {
    position: relative;
    display: flex;
    flex: 1;
    min-height: 0;
    background: linear-gradient(#a3c3ec 0, #83a4d3 23%, #6386b9 55%, #587db3 76%, #6792d0);
}

.swoosh {
    position: absolute;
    left: 0;
    top: 0;
}

.canvas {
    position: relative;
    flex: 1;
    padding: 22px 0 0 150px;
    overflow: hidden;
}

.sheet {
    width: 796px;
    height: 1123px;
    padding: 72px 96px 0;
    border: 1px solid #56657e;
    background: #fff;
    box-shadow: 2px 2px 6px #33486e;
}

.margins {
    display: flex;
    justify-content: space-between;
}

.crop {
    width: 24px;
    height: 24px;
    border-bottom: 1px solid #a5a5a5;
}

.crop.left {
    border-right: 1px solid #a5a5a5;
}

.crop.right {
    border-left: 1px solid #a5a5a5;
}

.text-area {
    padding: 0 24px;
}

.caret {
    display: block;
    width: 2px;
    height: 18px;
    background: #000;
}

.scrollbar {
    position: relative;
    display: flex;
    flex-direction: column;
    align-items: center;
    width: 17px;
    padding-right: 1px;
    border-left: 1px solid #b4d0f5;
    background: #a5c4ef;
}

.splitter {
    width: 9px;
    height: 2px;
    margin: 3px 0;
    background: #3f4c66;
}

.ruler {
    height: 15px;
}

.track {
    display: flex;
    flex-direction: column;
    flex: 1;
    width: 14px;
    background: linear-gradient(90deg, #7493bd, #86a3cc);
}

.step {
    height: 17px;
    background: #7896c0;
}

.step::after {
    content: "";
    display: block;
    width: 0;
    margin: 0 auto;
    border: 4px solid transparent;
}

.up::after {
    border-top: none;
    border-bottom-color: #46557a;
}

.down {
    margin-top: auto;
}

.down::after {
    border-bottom: none;
    border-top-color: #46557a;
}

.thumb {
    display: flex;
    align-items: center;
    justify-content: center;
    height: 70%;
    border: 1px solid #4c6389;
    border-radius: 2px;
    background: linear-gradient(90deg, #f2f5fa, #dbe3ee 50%, #b9c8dc 55%, #d7e2f0);
}

.thumb i {
    width: 7px;
    height: 7px;
    background: repeating-linear-gradient(#64789c 0 1px, transparent 1px 2px);
}

.meter {
    position: absolute;
    right: 1px;
    bottom: 82px;
    width: 9px;
    height: 60px;
    border: 1px solid #8b98ad;
    border-radius: 4px;
    background: repeating-linear-gradient(#46d35c 0 2px, #26303f 2px 3px) 1px 42px / 5px 14px no-repeat #313a4b;
}

.browse {
    display: flex;
    flex-direction: column;
    height: 52px;
}

.browse button {
    flex: 1;
}

/* status bar */
.statusbar {
    display: flex;
    height: 23px;
    border-top: 1px solid #567db0;
    border-bottom: 1px solid #10294b;
    background: linear-gradient(#dceaff 0, #d7e6fc 7px, #b5d0f5 8px, #d8e6fb 100%);
    color: #15285c;
}

.stat {
    padding: 0 8px 2px;
    white-space: nowrap;
}

.stat.sep {
    padding-right: 9px;
    border-right: 1px solid #8aa9d8;
    box-shadow: 1px 0 #f2f7ff;
}

.stat + .stat svg {
    margin: 0 1px;
}

.stat[aria-label="宏录制"] {
    padding-left: 14px;
}

.status-right {
    display: flex;
    align-items: center;
    margin-left: auto;
    padding: 0 5px 0 6px;
    border-left: 1px solid #6c93cb;
    background: linear-gradient(#c9defc 0, #b4d0f8 7px, #8fb6ee 8px, #b5d0f7);
}

.views {
    display: flex;
    height: 18px;
    border: 1px solid #e4effd;
    border-radius: 2px;
    background: linear-gradient(#c8dcf8, #a5c5f0);
}

.view {
    display: flex;
    align-items: center;
    justify-content: center;
    width: 18px;
    border-left: 1px solid #d5e5fa;
}

.view.on {
    background: linear-gradient(#ffd98d, #ffb944 50%, #ffe690);
}

.percent {
    width: 50px;
}

.round {
    display: flex;
    align-items: center;
    justify-content: center;
    width: 16px;
    height: 16px;
    border: 1px solid #51678f;
    border-radius: 50%;
    background: radial-gradient(#fff, #c9d6ea);
    box-shadow: inset 0 0 0 1px #fff;
}

.zoom {
    width: 102px;
    height: 16px;
    margin: 0;
    appearance: none;
    background: linear-gradient(#6f8fbf, #6f8fbf) 0 7px / 100% 1px no-repeat, linear-gradient(#fff, #fff) 0 8px / 100% 1px no-repeat;
}

.zoom::-webkit-slider-thumb {
    appearance: none;
    width: 9px;
    height: 13px;
    border: 1px solid #4a679a;
    border-radius: 1px 1px 5px 5px;
    background: #e8f0fb;
}

/* taskbar */
.taskbar {
    position: relative;
    display: flex;
    align-items: center;
    height: 40px;
    border-top: 1px solid #6e9abb;
    background: linear-gradient(90deg, #1b5588 0, #2c6d9a 80px, #23689a 120px, #2d7394 600px, #1d6390 800px, #1a5a91 1280px, #184e87 1500px, #133d70 1800px, #16345a);
    color: #fff;
    overflow: hidden;
}

.streak {
    position: absolute;
    left: 1335px;
    top: -30px;
    width: 12px;
    height: 100px;
    background: #a0b9d4;
    filter: blur(4px);
    transform: rotate(-52deg);
}

.start {
    margin-left: 9px;
}

.pinned {
    margin: 0 16px 0 26px;
}

.task {
    display: flex;
    align-items: center;
    gap: 5px;
    width: 160px;
    height: 38px;
    margin-right: 2px;
    padding: 0 0 2px 10px;
    border: 1px solid #173f5e;
    border-radius: 3px;
    box-shadow: inset 0 0 0 1px #8fb7c8;
    background: linear-gradient(165deg, #76a8bd, #4b8aa6 48%, #367a9b 52%, #4689a4);
    white-space: nowrap;
}

.task.active {
    box-shadow: inset 0 0 0 1px #dcebf1;
    background: linear-gradient(165deg, #c8dce6, #a0c1cf 48%, #77a8bc 52%, #9cc4d0);
}

.tray {
    display: flex;
    align-items: center;
    gap: 8px;
    margin-left: auto;
}

.keyboard {
    margin-right: 7px;
}

.clock {
    width: 76px;
    line-height: 18px;
    text-align: center;
}

.show-desktop {
    width: 14px;
    height: 100%;
    border: 1px solid #6f88a5;
    background: linear-gradient(135deg, #6b839f, #152d50 50%, #1c4475);
}

/* overlays */
.callout {
    position: absolute;
    left: 0;
    top: 0;
    z-index: 5;
}

.watermark {
    position: absolute;
    right: 94px;
    bottom: 31px;
    z-index: 5;
    filter: drop-shadow(0 0 1px #4a6794);
}

.bai {
    font: bold 76px Roboto, sans-serif;
    stroke: #dbe6f4;
    stroke-width: 2px;
}

.du {
    font: 500 53px Roboto, sans-serif;
    fill: #5f88c0;
}

.jingyan {
    font: bold 58px "Noto Sans CJK SC", sans-serif;
}

.url {
    font: 40px "Open Sans", sans-serif;
    fill: #fff;
    fill-opacity: .85;
}
```
